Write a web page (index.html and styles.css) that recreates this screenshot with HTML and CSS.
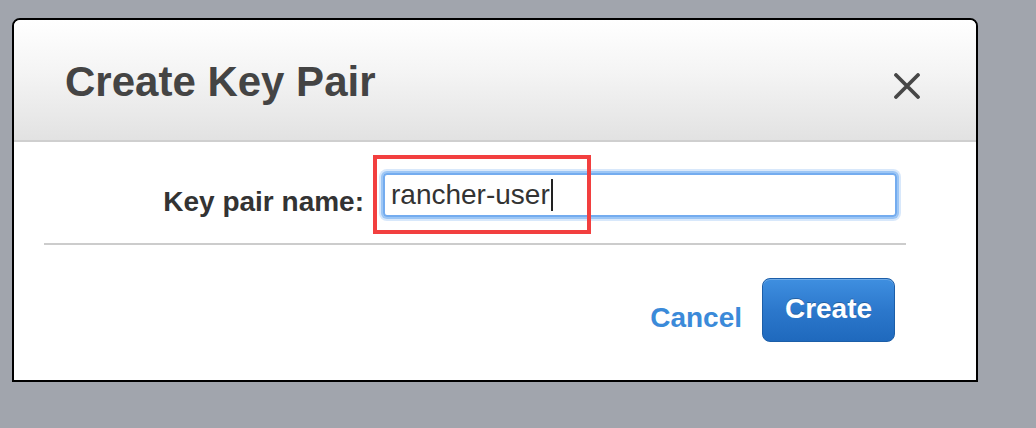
FILE: index.html
```html
<!DOCTYPE html>
<html>
<head>
<meta charset="utf-8">
<link rel="stylesheet" href="styles.css">
</head>
<body>
<div class="dialog">
  <div class="dialog-header">
    <h1 class="dialog-title">Create Key Pair</h1>
    <button class="close-btn" aria-label="Close">
      <svg width="28" height="26" viewBox="0 0 28 26"><path d="M3 2 L25 24 M25 2 L3 24" stroke="#474747" stroke-width="3.8" stroke-linecap="round" fill="none"/></svg>
    </button>
  </div>
  <div class="dialog-body">
    <div class="form-row">
      <label class="form-label" for="kp">Key pair name:</label>
      <div class="input-wrap">
        <div class="text-input" id="kp"><span>rancher-user</span><span class="caret"></span></div>
      </div>
      <div class="highlight"></div>
    </div>
    <div class="separator"></div>
  </div>
  <div class="dialog-footer">
    <a class="cancel-link">Cancel</a>
    <button class="create-btn">Create</button>
  </div>
</div>
</body>
</html>
```

FILE: styles.css
```css
html, body {
  margin: 0;
  padding: 0;
}
body {
  background: #a1a5ad;
  width: 1036px;
  height: 428px;
  overflow: hidden;
  font-family: "Liberation Sans", Arial, sans-serif;
  padding-top: 18px;
  padding-left: 12px;
  box-sizing: border-box;
}
.dialog {
  width: 966px;
  height: 364px;
  box-sizing: border-box;
  border: 2px solid #000;
  border-radius: 8px 8px 0 0;
  background: #fff;
  overflow: hidden;
  display: flex;
  flex-direction: column;
}
.dialog-header {
  height: 122px;
  box-sizing: border-box;
  border-bottom: 2px solid #cfcfcf;
  background: linear-gradient(to bottom, #ffffff 0%, #f4f4f4 45%, #e2e2e2 100%);
  display: flex;
  align-items: center;
  justify-content: space-between;
  padding: 0 55px 0 51px;
}
.dialog-title {
  margin: 0;
  font-size: 42px;
  line-height: 42px;
  font-weight: bold;
  color: #444;
  margin-top: 4px;
}
.close-btn {
  border: 0;
  background: none;
  padding: 0;
  width: 28px;
  height: 26px;
  margin-top: 12px;
  display: flex;
}
.dialog-body {
  padding: 30px 70px 0 30px;
  position: relative;
}
.form-row {
  display: flex;
  align-items: center;
  position: relative;
}
.form-label {
  width: 320px;
  text-align: right;
  font-size: 28px;
  font-weight: bold;
  color: #333;
  margin-top: 14px;
}
.input-wrap {
  margin-left: 19px;
}
.text-input {
  width: 514px;
  height: 44px;
  box-sizing: border-box;
  border: 2px solid #74acef;
  border-radius: 4px;
  box-shadow: 0 0 0 2px #9cc6f5, 0 0 0 4px #d8e8fb;
  display: flex;
  align-items: center;
  padding-left: 6px;
  font-size: 28px;
  color: #333;
}
.caret {
  display: inline-block;
  width: 2px;
  height: 32px;
  background: #222;
  margin-left: 1px;
}
.highlight {
  position: absolute;
  left: 329px;
  top: -17px;
  width: 218px;
  height: 79px;
  box-sizing: border-box;
  border: 4px solid #f23f3f;
  pointer-events: none;
}
.separator {
  height: 2px;
  background: #cccccc;
  margin-top: 25px;
}
.dialog-footer {
  display: flex;
  justify-content: flex-end;
  align-items: center;
  padding: 33px 81px 0 0;
}
.cancel-link {
  font-size: 28px;
  font-weight: bold;
  color: #3b8ad9;
  margin-right: 20px;
  margin-top: 16px;
  cursor: pointer;
}
.create-btn {
  width: 133px;
  height: 64px;
  box-sizing: border-box;
  border: 1px solid #1c5ea8;
  border-radius: 8px;
  background: linear-gradient(to bottom, #3f8fe0 0%, #2c78cc 50%, #1f69bd 100%);
  box-shadow: inset 0 1px 0 rgba(255,255,255,0.25);
  color: #fff;
  font-family: "Liberation Sans", Arial, sans-serif;
  font-size: 28px;
  font-weight: bold;
  text-shadow: 0 -1px 0 rgba(0,0,0,0.25);
  padding: 0 0 3px 0;
}
```
